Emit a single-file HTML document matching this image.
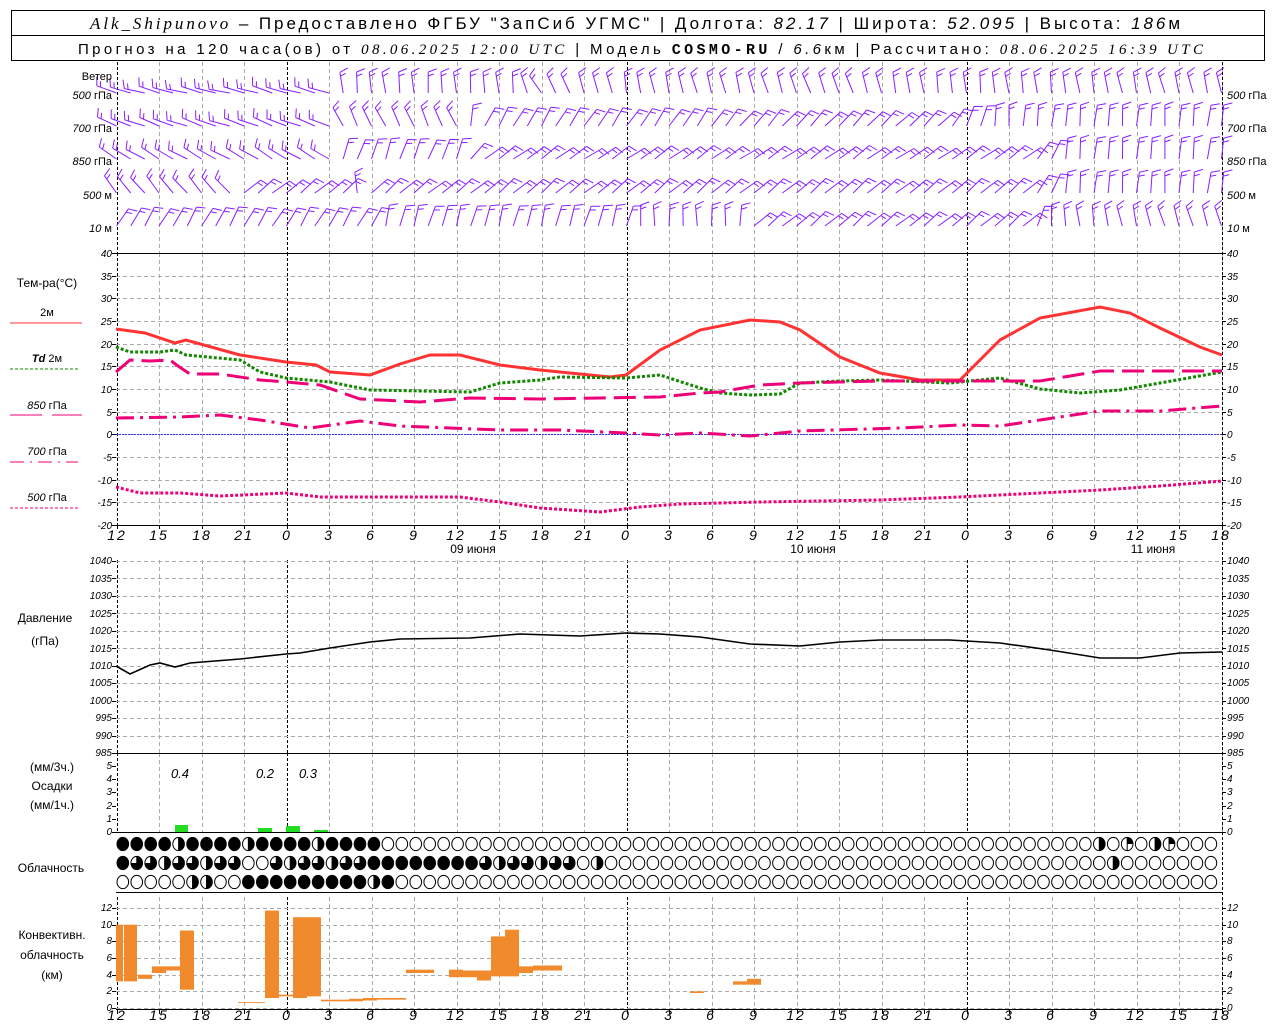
<!DOCTYPE html>
<html><head><meta charset="utf-8"><style>
html,body{margin:0;padding:0;background:#fff}
svg{display:block}
text{font-family:"Liberation Sans","DejaVu Sans",sans-serif;fill:#000}
.ax{font-size:10px;font-style:italic}
.hr{font-size:14px;font-style:italic;text-anchor:middle;letter-spacing:2px}
.lb{font-size:12px;text-anchor:middle}
</style></head><body>
<svg id="s" width="1280" height="1024" viewBox="0 0 1280 1024" xmlns="http://www.w3.org/2000/svg">
<rect x="0" y="0" width="1280" height="1024" fill="#fff"/>
<g id="grid"></g>
<g id="data"></g>
<!-- header -->
<rect x="11.5" y="10.5" width="1253" height="50" fill="none" stroke="#000"/>
<line x1="11" y1="35.5" x2="1265" y2="35.5" stroke="#000"/>
<text x="90" y="29" font-size="17" textLength="1090" lengthAdjust="spacing"><tspan font-family="Liberation Serif" font-style="italic">Alk_Shipunovo</tspan> – Предоставлено ФГБУ "ЗапСиб УГМС" | Долгота: <tspan font-style="italic">82.17</tspan> | Широта: <tspan font-style="italic">52.095</tspan> | Высота: <tspan font-style="italic">186</tspan>м</text>
<text x="78" y="54" font-size="15" textLength="1125" lengthAdjust="spacing">Прогноз на 120 часа(ов) от <tspan font-style="italic" font-family="Liberation Serif">08.06.2025 12:00 UTC</tspan>  | Модель <tspan font-weight="bold" font-family="Liberation Mono">COSMO-RU</tspan> / <tspan font-style="italic">6.6</tspan>км | Рассчитано: <tspan font-style="italic" font-family="Liberation Serif">08.06.2025 16:39 UTC</tspan></text>
<!-- wind labels -->
<g font-size="11" text-anchor="end">
<text x="112" y="80">Ветер</text>
<text x="112" y="99"><tspan font-style="italic">500</tspan> гПа</text>
<text x="112" y="132"><tspan font-style="italic">700</tspan> гПа</text>
<text x="112" y="165"><tspan font-style="italic">850</tspan> гПа</text>
<text x="112" y="199"><tspan font-style="italic">500</tspan> м</text>
<text x="112" y="232"><tspan font-style="italic">10</tspan>  м</text>
</g>
<g font-size="11">
<text x="1227" y="99"><tspan font-style="italic">500</tspan> гПа</text>
<text x="1227" y="132"><tspan font-style="italic">700</tspan> гПа</text>
<text x="1227" y="165"><tspan font-style="italic">850</tspan> гПа</text>
<text x="1227" y="199"><tspan font-style="italic">500</tspan> м</text>
<text x="1227" y="232"><tspan font-style="italic">10</tspan>  м</text>
</g>
<!-- temp legend -->
<g font-size="12" text-anchor="middle">
<text x="47" y="287">Тем-ра(°С)</text>
<text x="47" y="316" font-size="11">2м</text>
<text x="47" y="362" font-size="11"><tspan font-style="italic" font-weight="bold">Td</tspan>  2м</text>
<text x="47" y="409" font-size="11"><tspan font-style="italic">850</tspan> гПа</text>
<text x="47" y="455" font-size="11"><tspan font-style="italic">700</tspan> гПа</text>
<text x="47" y="501" font-size="11"><tspan font-style="italic">500</tspan> гПа</text>
<text x="45" y="622">Давление</text>
<text x="45" y="645">(гПа)</text>
<text x="52" y="771">(мм/3ч.)</text>
<text x="52" y="790">Осадки</text>
<text x="52" y="809">(мм/1ч.)</text>
<text x="51" y="872">Облачность</text>
<text x="52" y="939">Конвективн.</text>
<text x="52" y="959">облачность</text>
<text x="52" y="979">(км)</text>
</g>
<line x1="10" y1="323" x2="82" y2="323" stroke="#f33"/>
<line x1="10" y1="369" x2="78" y2="369" stroke="#180" stroke-dasharray="3,2"/>
<line x1="10" y1="415" x2="42" y2="415" stroke="#e07"/><line x1="52" y1="415" x2="82" y2="415" stroke="#e07"/>
<line x1="10" y1="462" x2="78" y2="462" stroke="#e07" stroke-dasharray="14,6,2,6"/>
<line x1="10" y1="508" x2="78" y2="508" stroke="#e07" stroke-dasharray="3,2"/>
<!-- temp axis -->
<g class="ax" text-anchor="end">
<text x="112" y="257">40</text><text x="112" y="280">35</text><text x="112" y="302">30</text><text x="112" y="325">25</text><text x="112" y="348">20</text><text x="112" y="370">15</text><text x="112" y="393">10</text><text x="112" y="416">5</text><text x="112" y="438">0</text><text x="112" y="461">-5</text><text x="112" y="484">-10</text><text x="112" y="506">-15</text><text x="112" y="529">-20</text>
</g>
<g class="ax">
<text x="1227" y="257">40</text><text x="1227" y="280">35</text><text x="1227" y="302">30</text><text x="1227" y="325">25</text><text x="1227" y="348">20</text><text x="1227" y="370">15</text><text x="1227" y="393">10</text><text x="1227" y="416">5</text><text x="1227" y="438">0</text><text x="1227" y="461">-5</text><text x="1227" y="484">-10</text><text x="1227" y="506">-15</text><text x="1227" y="529">-20</text>
</g>
<!-- pressure axis -->
<g class="ax" font-size="9" text-anchor="end">
<text x="112" y="564">1040</text><text x="112" y="582">1035</text><text x="112" y="599">1030</text><text x="112" y="617">1025</text><text x="112" y="634">1020</text><text x="112" y="652">1015</text><text x="112" y="669">1010</text><text x="112" y="686">1005</text><text x="112" y="704">1000</text><text x="112" y="721">995</text><text x="112" y="739">990</text><text x="112" y="756">985</text>
</g>
<g class="ax" font-size="9">
<text x="1227" y="564">1040</text><text x="1227" y="582">1035</text><text x="1227" y="599">1030</text><text x="1227" y="617">1025</text><text x="1227" y="634">1020</text><text x="1227" y="652">1015</text><text x="1227" y="669">1010</text><text x="1227" y="686">1005</text><text x="1227" y="704">1000</text><text x="1227" y="721">995</text><text x="1227" y="739">990</text><text x="1227" y="756">985</text>
</g>
<!-- precip axis -->
<g class="ax" font-size="9" text-anchor="end">
<text x="112" y="769">5</text><text x="112" y="782">4</text><text x="112" y="795">3</text><text x="112" y="809">2</text><text x="112" y="822">1</text><text x="112" y="835">0</text>
</g>
<g class="ax" font-size="9">
<text x="1227" y="769">5</text><text x="1227" y="782">4</text><text x="1227" y="795">3</text><text x="1227" y="809">2</text><text x="1227" y="822">1</text><text x="1227" y="835">0</text>
</g>
<g font-size="13" font-style="italic" text-anchor="middle">
<text x="180" y="778">0.4</text><text x="265" y="778">0.2</text><text x="308" y="778">0.3</text>
</g>
<!-- convective axis -->
<g class="ax" font-size="9" text-anchor="end">
<text x="112" y="911">12</text><text x="112" y="928">10</text><text x="112" y="944">8</text><text x="112" y="961">6</text><text x="112" y="978">4</text><text x="112" y="994">2</text><text x="112" y="1011">0</text>
</g>
<g class="ax" font-size="9">
<text x="1227" y="911">12</text><text x="1227" y="928">10</text><text x="1227" y="944">8</text><text x="1227" y="961">6</text><text x="1227" y="978">4</text><text x="1227" y="994">2</text><text x="1227" y="1011">0</text>
</g>
<!-- hour labels -->
<g class="hr">
<text x="117" y="540">12</text><text x="159" y="540">15</text><text x="202" y="540">18</text><text x="244" y="540">21</text><text x="287" y="540">0</text><text x="329" y="540">3</text><text x="371" y="540">6</text><text x="414" y="540">9</text><text x="456" y="540">12</text><text x="499" y="540">15</text><text x="541" y="540">18</text><text x="584" y="540">21</text><text x="626" y="540">0</text><text x="669" y="540">3</text><text x="711" y="540">6</text><text x="754" y="540">9</text><text x="796" y="540">12</text><text x="839" y="540">15</text><text x="881" y="540">18</text><text x="924" y="540">21</text><text x="966" y="540">0</text><text x="1009" y="540">3</text><text x="1051" y="540">6</text><text x="1094" y="540">9</text><text x="1136" y="540">12</text><text x="1179" y="540">15</text><text x="1221" y="540">18</text>
</g>
<g class="hr">
<text x="117" y="1020">12</text><text x="159" y="1020">15</text><text x="202" y="1020">18</text><text x="244" y="1020">21</text><text x="287" y="1020">0</text><text x="329" y="1020">3</text><text x="371" y="1020">6</text><text x="414" y="1020">9</text><text x="456" y="1020">12</text><text x="499" y="1020">15</text><text x="541" y="1020">18</text><text x="584" y="1020">21</text><text x="626" y="1020">0</text><text x="669" y="1020">3</text><text x="711" y="1020">6</text><text x="754" y="1020">9</text><text x="796" y="1020">12</text><text x="839" y="1020">15</text><text x="881" y="1020">18</text><text x="924" y="1020">21</text><text x="966" y="1020">0</text><text x="1009" y="1020">3</text><text x="1051" y="1020">6</text><text x="1094" y="1020">9</text><text x="1136" y="1020">12</text><text x="1179" y="1020">15</text><text x="1221" y="1020">18</text>
</g>
<g class="lb">
<text x="473" y="553">09 июня</text><text x="813" y="553">10 июня</text><text x="1153" y="553">11 июня</text>
</g>
</svg>
<script>
(function(){
var NS="http://www.w3.org/2000/svg";
var G=document.getElementById('grid'),D=document.getElementById('data');
function el(p,t,a){var e=document.createElementNS(NS,t);for(var k in a)e.setAttribute(k,a[k]);p.appendChild(e);return e;}
var X0=116.5,H=14.167;
function hx(h){return X0+h*H;}
var panels=[[62,253],[253,525],[560,753],[753,832],[897,1010]];
for(var i=0;i<=26;i++){var x=Math.round(hx(i*3))+0.5;var mid=(i%8==4)||i==0;
 panels.forEach(function(p){el(G,'line',{x1:x,y1:p[0],x2:x,y2:p[1],stroke:mid?'#000':'#aaa','stroke-dasharray':mid?'3,2':'4,3'});});
 [525,1010].forEach(function(y){el(G,'line',{x1:x,y1:y,x2:x,y2:y+4,stroke:'#000'});});
}
function hgrid(y0,y1,n){for(var j=0;j<=n;j++){var y=Math.round(y0+(y1-y0)*j/n)+0.5;
 el(G,'line',{x1:116,y1:y,x2:1222,y2:y,stroke:'#aaa','stroke-dasharray':'4,3'});
 el(G,'line',{x1:112,y1:y,x2:116,y2:y,stroke:'#000'});el(G,'line',{x1:1222,y1:y,x2:1226,y2:y,stroke:'#000'});}}
hgrid(253,525,12);hgrid(561,753,11);hgrid(908,1008,6);
for(var j=0;j<=5;j++){var y=Math.round(766+j*13.2)+0.5;el(G,'line',{x1:112,y1:y,x2:116,y2:y,stroke:'#000'});el(G,'line',{x1:1222,y1:y,x2:1226,y2:y,stroke:'#000'});}
[253.5,525.5,753.5,832.5,892.5,1009.5].forEach(function(y){el(G,'line',{x1:116,y1:y,x2:1222,y2:y,stroke:'#000'});});
el(G,'line',{x1:116,y1:434.5,x2:1222,y2:434.5,stroke:'#33f','stroke-dasharray':'2,1'});
el(G,'line',{x1:1222.5,y1:62,x2:1222.5,y2:1010,stroke:'#000','stroke-dasharray':'3,2'});
function pl(pts,st,w,da){var s='';for(var i=0;i<pts.length;i+=2)s+=pts[i]+','+pts[i+1]+' ';var a={points:s,fill:'none',stroke:st,'stroke-width':w};if(da)a['stroke-dasharray']=da;el(D,'polyline',a);}
pl([116,329,145,333,175,343,186,340,240,355,286,362,316,365,330,372,370,375,400,364,430,355,460,355,500,365,540,370,590,375,610,377,626,375,660,350,700,330,750,320,780,322,800,330,840,357,880,373,920,380,960,380,1000,340,1040,318,1100,307,1130,313,1160,328,1200,347,1222,355],'#f33',3);
pl([116,347,130,352,160,352,175,350,186,355,240,360,260,372,286,378,330,382,370,390,470,392,500,383,540,380,560,377,626,378,660,375,700,388,720,393,750,395,780,394,800,383,840,381,880,380,950,383,1000,378,1040,389,1080,393,1120,390,1160,383,1222,372],'#180',3,'3,2');
pl([116,372,130,360,150,361,170,360,178,366,190,374,220,374,260,380,286,382,320,385,340,392,360,399,420,402,470,398,540,399,600,398,660,397,700,393,720,392,760,385,800,383,880,381,960,381,1040,381,1100,371,1222,371],'#e07',3,'22,8');
pl([116,418,180,417,220,415,260,420,310,428,360,421,400,426,500,430,560,430,626,433,660,435,700,433,750,436,800,431,900,428,960,425,1000,426,1040,420,1100,411,1160,411,1222,406],'#e07',3,'18,6,3,6');
pl([116,487,140,493,180,493,220,496,286,493,320,497,460,497,500,502,540,508,600,512,640,507,680,504,760,502,880,500,960,497,1040,493,1100,490,1160,486,1222,481],'#e07',3,'3,2');
pl([116,666,130,674,150,665,160,663,175,667,190,663,240,659,286,654,300,653,330,648,370,642,400,639,470,638,520,634,580,636,626,633,660,634,700,637,750,644,800,646,840,642,880,640,950,640,1000,643,1050,650,1100,658,1140,658,1180,653,1222,652],'#000',1.6);
[[175,825,13],[258,828,14],[286,826,14],[314,830,14]].forEach(function(b){el(D,'rect',{x:b[0],y:b[1],width:b[2],height:832-b[1],fill:'#2d2'});});
function ky(k){return 1008-k*8.33;}
[[116,7,3.2,10],[124,13,3.2,10],[138,14,3.5,4],[152,14,4.2,5],[166,14,4.5,5],[180,14,2.2,9.3],[238,27,0.6,0.7],[265,14,1.2,11.7],[279,14,1.4,1.6],[293,14,1.2,10.9],[307,14,1.4,10.9],[321,28,0.8,1.0],[349,14,0.8,1.1],[363,14,0.9,1.2],[377,29,1.0,1.2],[406,28,4.2,4.6],[449,14,3.7,4.6],[463,14,3.7,4.5],[477,14,3.3,4.5],[491,14,3.8,8.6],[505,14,3.8,9.4],[519,14,4.2,5],[533,29,4.5,5.1],[690,14,1.8,2],[733,14,2.8,3.2],[747,14,2.8,3.5]].forEach(function(b){el(D,'rect',{x:b[0],y:ky(b[3]),width:b[1],height:ky(b[2])-ky(b[3]),fill:'#f08a2c'});});
function cov(r,i){
 if(r==0){if(i<=18)return (i%5==4)?0.5:1; if(i==70||i==74)return 0.5; if(i==72||i==75)return 0.25; return 0;}
 if(r==1){if(i<=33){if(i==0||i>=18&&i<=25)return 1; if(i==9||i==10||i==33)return 0;return (i%3==0)?0.5:0.75;} if(i==34)return 0.5; if(i==71)return 0.5; return 0;}
 if(i>=9&&i<=19)return (i==18)?0.5:1; if(i==5||i==6)return 0.5; return 0;}
var CS=13.95,RX=5.8,RY=6.6;
[844,863,882].forEach(function(cy,r){for(var i=0;i<79;i++){var cx=122.8+i*CS;var c=cov(r,i);
 el(D,'ellipse',{cx:cx,cy:cy,rx:RX,ry:RY,fill:c>=1?'#000':'#fff',stroke:'#000','stroke-width':1});
 if(c>0&&c<1){var d;if(c==0.5)d='M'+cx+','+(cy-RY)+' A'+RX+','+RY+' 0 0,1 '+cx+','+(cy+RY)+' Z';else if(c==0.25)d='M'+cx+','+cy+' L'+cx+','+(cy-RY)+' A'+RX+','+RY+' 0 0,1 '+(cx+RX)+','+cy+' Z';else d='M'+cx+','+cy+' L'+cx+','+(cy-RY)+' A'+RX+','+RY+' 0 1,1 '+(cx-RX)+','+cy+' Z';
  el(D,'path',{d:d,fill:'#000'});el(D,'line',{x1:cx,y1:cy-RY,x2:cx,y2:cy+RY,stroke:'#000'});}
}});
var rows=[[93,[[0,165],[15,165],[16,95],[28,95],[30,120],[36,100],[50,110],[60,95],[78,105]]],
[126,[[0,160],[15,160],[16,115],[24,115],[26,60],[40,55],[50,45],[58,45],[62,85],[78,85]]],
[159,[[0,150],[15,150],[16,70],[24,70],[26,35],[64,35],[67,85],[78,85]]],
[193,[[0,130],[8,130],[9,40],[16,40],[17,100],[18,40],[64,40],[67,85],[78,85]]],
[226,[[0,60],[18,60],[19,75],[36,75],[37,90],[44,90],[45,40],[64,40],[66,95],[78,110]]]];
rows.forEach(function(r){var by=r[0],kp=r[1];for(var h=0;h<=78;h++){var a=kp[0][1];for(var k=0;k<kp.length-1;k++){if(h>=kp[k][0]&&h<=kp[k+1][0]){var t=(h-kp[k][0])/((kp[k+1][0]-kp[k][0])||1);a=kp[k][1]+t*(kp[k+1][1]-kp[k][1]);}}
 a+=((h*37)%11-5);var rad=a*Math.PI/180,L=21,bx=hx(h),ex=bx+L*Math.cos(rad),ey=by-L*Math.sin(rad);
 var d='M'+bx.toFixed(1)+','+by+' L'+ex.toFixed(1)+','+ey.toFixed(1);
 var ba=(a-70)*Math.PI/180;for(var n=0;n<2;n++){var px=ex-n*4*Math.cos(rad),py=ey+n*4*Math.sin(rad);var bl=n==0?9:6;d+=' M'+px.toFixed(1)+','+py.toFixed(1)+' l'+(bl*Math.cos(ba)).toFixed(1)+','+(-bl*Math.sin(ba)).toFixed(1);}
 el(D,'path',{d:d,stroke:'#8a1fff','stroke-width':1,fill:'none'});}});
})();
</script>
</body></html>
